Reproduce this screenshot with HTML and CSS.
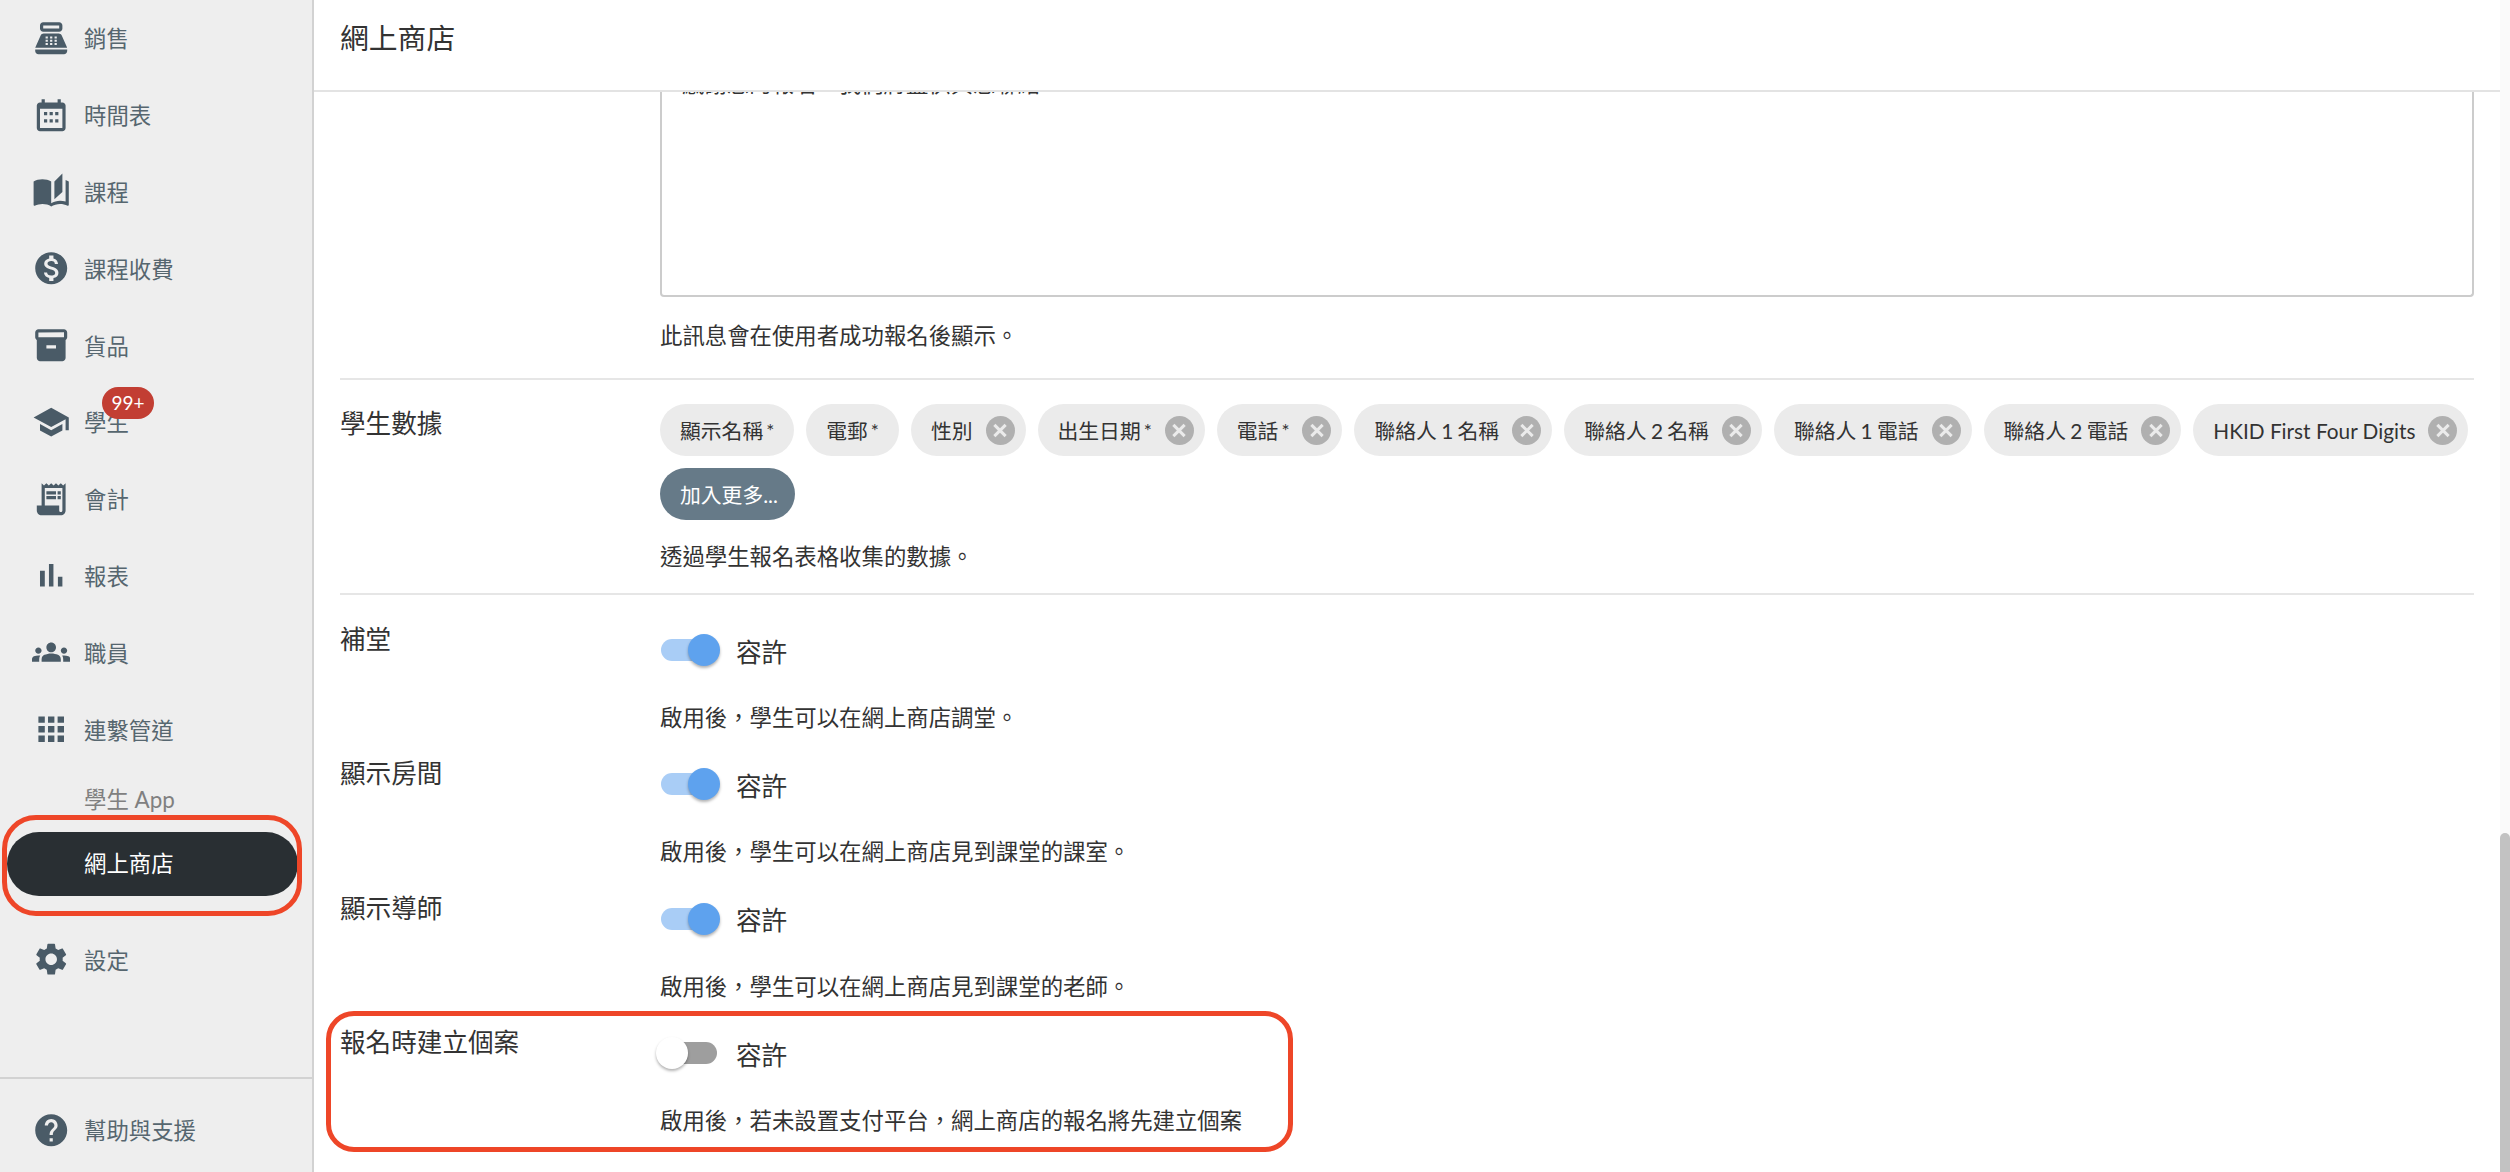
FILE: index.html
```html
<!DOCTYPE html>
<html lang="zh-Hant">
<head>
<meta charset="utf-8">
<title>網上商店</title>
<link rel="stylesheet" href="styles.css">
</head>
<body>
<div class="app">
  <aside class="sidebar">
    <nav class="nav">
      <a class="item"><span class="ico"><svg viewBox="0 0 24 24"><path d="M17 2H7c-1.1 0-2 .9-2 2v2c0 1.1.9 2 2 2h10c1.100 0 2-.9 2-2V4c0-1.100-.9-2-2-2zm0 4H7V4h10v2zm3 16H4c-1.100 0-2-.9-2-2v-1h20v1c0 1.100-.9 2-2 2zm-1.470-11.810C18.210 9.470 17.490 9 16.700 9H7.300c-.79 0-1.510.47-1.830 1.190L2 18h20l-3.470-7.810z"/><path class="cut" d="M8.500 11h1.400v1.200H8.500zM11.300 11h1.400v1.200h-1.400zM14.100 11h1.400v1.200h-1.400zM8.500 13h1.400v1.200H8.500zM11.300 13h1.400v1.200h-1.400zM14.100 13h1.400v1.200h-1.400zM8.500 15h1.400v1.200H8.500zM11.300 15h1.400v1.200h-1.400zM14.100 15h1.400v1.200h-1.400z"/></svg></span><span class="txt">銷售</span></a>
      <a class="item"><span class="ico"><svg viewBox="0 0 24 24"><path d="M19 4h-1V2h-2v2H8V2H6v2H5c-1.100 0-2 .9-2 2v14c0 1.100.9 2 2 2h14c1.100 0 2-.9 2-2V6c0-1.100-.9-2-2-2zm0 16H5V8h14v12z"/><path d="M7.500 10h2v2h-2zM11 10h2v2h-2zM14.500 10h2v2h-2zM7.500 14.500h2v2h-2zM11 14.500h2v2h-2zM14.500 14.500h2v2h-2z"/></svg></span><span class="txt">時間表</span></a>
      <a class="item"><span class="ico"><svg viewBox="0 0 24 24"><path d="M19 1l-5 5v11l5-4.500V1zM1 6v14.650c0 .25.25.5.5.5.1 0 .15-.05.25-.05C3.100 20.450 5.050 20 6.500 20c1.950 0 4.050.4 5.500 1.500V6c-1.450-1.100-3.550-1.500-5.500-1.500S2.450 4.900 1 6zm22 13.500V6c-.6-.45-1.250-.75-2-1v13.500c-1.100-.35-2.300-.5-3.500-.5-1.700 0-4.150.65-5.500 1.500v2c1.350-.85 3.800-1.500 5.500-1.500 1.650 0 3.350.3 4.750 1.050.1.05.15.05.25.05.25 0 .5-.25.5-.5v-1.100z"/></svg></span><span class="txt">課程</span></a>
      <a class="item"><span class="ico"><svg viewBox="0 0 24 24"><path d="M12 2C6.480 2 2 6.480 2 12s4.480 10 10 10 10-4.480 10-10S17.520 2 12 2zm1.410 16.090V20h-2.670v-1.930c-1.710-.36-3.160-1.460-3.270-3.400h1.960c.1 1.050.82 1.870 2.650 1.870 1.960 0 2.400-.98 2.400-1.590 0-.83-.44-1.610-2.670-2.140-2.480-.6-4.180-1.620-4.180-3.670 0-1.720 1.390-2.840 3.110-3.210V4h2.670v1.950c1.860.45 2.790 1.860 2.850 3.390H14.300c-.05-1.110-.64-1.870-2.220-1.870-1.500 0-2.400.68-2.400 1.640 0 .84.65 1.390 2.670 1.910s4.180 1.390 4.180 3.910c-.01 1.830-1.380 2.830-3.120 3.160z"/></svg></span><span class="txt">課程收費</span></a>
      <a class="item"><span class="ico"><svg viewBox="0 0 24 24"><path d="M20 2H4c-1 0-2 .9-2 2v3.010c0 .72.43 1.340 1 1.690V20c0 1.100 1.100 2 2 2h14c.9 0 2-.9 2-2V8.700c.57-.35 1-.97 1-1.690V4c0-1.100-1-2-2-2zm-5 12H9v-2h6v2zm5-7H4V4l16-.02V7z"/></svg></span><span class="txt">貨品</span></a>
      <a class="item"><span class="ico"><svg viewBox="0 0 24 24"><path d="M5 13.180v4L12 21l7-3.820v-4L12 17l-7-3.820zM12 3L1 9l11 6 9-4.910V17h2V9L12 3z"/></svg></span><span class="txt">學生</span><span class="badge">99+</span></a>
      <a class="item"><span class="ico"><svg viewBox="0 0 24 24"><path fill-rule="evenodd" d="M19.500 3.500L18 2l-1.500 1.500L15 2l-1.500 1.500L12 2l-1.500 1.500L9 2 7.500 3.500 6 2v14H3v3c0 1.660 1.340 3 3 3h12c1.660 0 3-1.340 3-3V2l-1.500 1.500zM19 19c0 .55-.45 1-1 1s-1-.45-1-1v-3H8V5h11v14z"/><path d="M9 7h6v2H9zM16 7h2v2h-2zM9 10h6v2H9zM16 10h2v2h-2z"/></svg></span><span class="txt">會計</span></a>
      <a class="item"><span class="ico"><svg viewBox="0 0 24 24"><path d="M5 9.200h3V19H5zM10.600 5h2.800v14h-2.800zM16.200 13H19v6h-2.800z"/></svg></span><span class="txt">報表</span></a>
      <a class="item"><span class="ico"><svg viewBox="0 0 24 24"><path d="M12 12.750c1.630 0 3.070.39 4.240.9 1.080.48 1.760 1.560 1.760 2.730V18H6v-1.610c0-1.180.68-2.260 1.760-2.730 1.170-.52 2.610-.91 4.240-.91zM4 13c1.100 0 2-.9 2-2s-.9-2-2-2-2 .9-2 2 .9 2 2 2zm1.130 1.100c-.37-.06-.74-.1-1.130-.1-.99 0-1.930.21-2.780.58C.48 14.900 0 15.620 0 16.430V18h4.500v-1.610c0-.83.23-1.610.63-2.290zM20 13c1.100 0 2-.9 2-2s-.9-2-2-2-2 .9-2 2 .9 2 2 2zm4 3.430c0-.81-.48-1.530-1.220-1.850-.85-.37-1.790-.58-2.780-.58-.39 0-.76.04-1.130.1.4.68.63 1.460.63 2.290V18H24v-1.570zM12 6c1.660 0 3 1.340 3 3s-1.340 3-3 3-3-1.340-3-3 1.340-3 3-3z"/></svg></span><span class="txt">職員</span></a>
      <a class="item"><span class="ico"><svg viewBox="0 0 24 24"><path d="M4 8h4V4H4v4zm6 12h4v-4h-4v4zm-6 0h4v-4H4v4zm0-6h4v-4H4v4zm6 0h4v-4h-4v4zm6-10v4h4V4h-4zm-6 4h4V4h-4v4zm6 6h4v-4h-4v4zm0 6h4v-4h-4v4z"/></svg></span><span class="txt">連繫管道</span></a>
      <div class="sub">
        <a class="sub-item">學生 App</a>
        <a class="sub-item active">網上商店<span class="mark-side"></span></a>
      </div>
      <a class="item"><span class="ico"><svg viewBox="0 0 24 24"><path d="M19.140 12.940c.04-.3.06-.61.06-.94 0-.32-.02-.64-.07-.94l2.030-1.580c.18-.14.23-.41.12-.61l-1.920-3.320c-.12-.22-.37-.29-.59-.22l-2.390.96c-.5-.38-1.030-.7-1.620-.94l-.36-2.540c-.04-.24-.24-.41-.48-.41h-3.840c-.24 0-.43.17-.47.41l-.36 2.540c-.59.24-1.130.57-1.620.94l-2.390-.96c-.22-.08-.47 0-.59.22L2.740 8.870c-.12.21-.08.47.12.61l2.030 1.580c-.05.3-.09.63-.09.94s.02.64.07.94l-2.030 1.580c-.18.14-.23.41-.12.61l1.920 3.320c.12.22.37.29.59.22l2.390-.96c.5.38 1.030.7 1.620.94l.36 2.540c.05.24.24.41.48.41h3.840c.24 0 .44-.17.47-.41l.36-2.540c.59-.24 1.130-.56 1.620-.94l2.390.96c.22.08.47 0 .59-.22l1.920-3.320c.12-.22.07-.47-.12-.61l-2.010-1.580zM12 15.600c-1.980 0-3.600-1.620-3.600-3.600s1.620-3.600 3.600-3.600 3.600 1.620 3.600 3.600-1.620 3.600-3.600 3.600z"/></svg></span><span class="txt">設定</span></a>
    </nav>
    <div class="side-foot">
      <a class="item"><span class="ico"><svg viewBox="0 0 24 24"><path d="M12 2C6.480 2 2 6.480 2 12s4.480 10 10 10 10-4.480 10-10S17.520 2 12 2zm1 17h-2v-2h2v2zm2.070-7.750l-.9.92C13.450 12.900 13 13.500 13 15h-2v-.5c0-1.100.45-2.100 1.170-2.830l1.240-1.260c.37-.36.59-.86.59-1.410 0-1.100-.9-2-2-2s-2 .9-2 2H8c0-2.210 1.790-4 4-4s4 1.790 4 4c0 .88-.36 1.680-.93 2.250z"/></svg></span><span class="txt">幫助與支援</span></a>
    </div>
  </aside>

  <main class="main">
    <header class="topbar">網上商店</header>
    <div class="pane">
      <div class="content">
        <section class="sec sec-msg">
          <div class="textarea"><div class="textarea-text">感謝您的報名，我們將盡快與您聯絡。</div></div>
          <p class="help help-msg">此訊息會在使用者成功報名後顯示。</p>
        </section>
        <section class="sec sec-data">
          <div class="label">學生數據</div>
          <div>
            <div class="chips">
              <span class="chip">顯示名稱<span class="req">*</span></span>
              <span class="chip">電郵<span class="req">*</span></span>
              <span class="chip">性別<span class="x"></span></span>
              <span class="chip">出生日期<span class="req">*</span><span class="x"></span></span>
              <span class="chip">電話<span class="req">*</span><span class="x"></span></span>
              <span class="chip chip-cjk">聯絡人 1 名稱<span class="x"></span></span>
              <span class="chip chip-cjk">聯絡人 2 名稱<span class="x"></span></span>
              <span class="chip chip-cjk">聯絡人 1 電話<span class="x"></span></span>
              <span class="chip chip-cjk">聯絡人 2 電話<span class="x"></span></span>
              <span class="chip">HKID First Four Digits<span class="x"></span></span>
              <span class="chip chip-add">加入更多...</span>
            </div>
            <p class="help help-data">透過學生報名表格收集的數據。</p>
          </div>
        </section>
        <div class="rows">
          <section class="row">
            <div class="label">補堂</div>
            <div>
              <div class="switch-line"><span class="switch on"></span>容許</div>
              <p class="help">啟用後，學生可以在網上商店調堂。</p>
            </div>
          </section>
          <section class="row">
            <div class="label">顯示房間</div>
            <div>
              <div class="switch-line"><span class="switch on"></span>容許</div>
              <p class="help">啟用後，學生可以在網上商店見到課堂的課室。</p>
            </div>
          </section>
          <section class="row">
            <div class="label">顯示導師</div>
            <div>
              <div class="switch-line"><span class="switch on"></span>容許</div>
              <p class="help">啟用後，學生可以在網上商店見到課堂的老師。</p>
            </div>
          </section>
          <section class="row">
            <div class="label">報名時建立個案</div>
            <div>
              <div class="switch-line"><span class="switch"></span>容許</div>
              <p class="help">啟用後，若未設置支付平台，網上商店的報名將先建立個案</p>
            </div>
            <span class="mark-row"></span>
          </section>
        </div>
      </div>
      <div class="scrollbar"><div class="thumb"></div></div>
    </div>
  </main>
</div>
</body>
</html>
```
FILE: styles.css
```css
* { box-sizing: border-box; }
html, body { margin: 0; height: 100%; overflow: hidden; }
body {
  font-family: Lato, "Noto Sans CJK TC", sans-serif;
  color: #333;
  background: #fff;
}
p { margin: 0; }

.app { display: flex; height: 1172px; }

.sidebar {
  width: 314px;
  flex: none;
  display: flex;
  flex-direction: column;
  justify-content: space-between;
  background: #eee;
  border-right: 2px solid #d2d2d2;
  color: #56666f;
  font-size: 22.4px;
}
.item {
  position: relative;
  display: flex;
  align-items: center;
  height: 76.8px;
  padding-left: 32px;
}
.ico {
  width: 39px;
  height: 39px;
  margin-right: 13px;
  flex: none;
}
.ico svg { display: block; width: 38.4px; height: 38.4px; fill: #4a5b67; }
.ico .cut { fill: #eee; }
.txt { margin-top: -2px; }
.badge {
  position: absolute;
  left: 102px;
  top: 3px;
  width: 52px;
  height: 32px;
  border-radius: 16px;
  background: #c23e33;
  color: #fff;
  font-size: 19px;
  line-height: 32px;
  text-align: center;
}
.sub { margin-bottom: 25.6px; }
.sub-item {
  position: relative;
  display: block;
  height: 64px;
  margin-left: 7px;
  width: 291px;
  padding-left: 77px;
  line-height: 64px;
  color: #808080;
}
.sub-item.active {
  background: #292f33;
  color: #fff;
  border-radius: 32px;
}
.mark-side {
  position: absolute;
  left: -5px;
  top: -17px;
  width: 300px;
  height: 101px;
  border: 5px solid #ee4628;
  border-radius: 34px;
}
.side-foot {
  border-top: 2px solid #d2d2d2;
  height: 95px;
  padding-top: 13px;
}

.main {
  flex: 1;
  min-width: 0;
  display: flex;
  flex-direction: column;
}
.topbar {
  position: relative;
  z-index: 1;
  height: 92px;
  flex: none;
  padding-left: 26px;
  background: #fff;
  border-bottom: 2px solid #e3e3e3;
  font-size: 28.8px;
  line-height: 76px;
  color: #333;
}
.pane { flex: 1; min-height: 0; display: flex; }
.content {
  flex: 1;
  min-width: 0;
  padding: 0 26px;
  overflow: hidden;
}
.scrollbar {
  width: 10px;
  flex: none;
  background: #fafafa;
  margin-top: -92px;
  position: relative;
  z-index: 2;
  display: flex;
  flex-direction: column;
  justify-content: flex-end;
}
.thumb {
  height: 339px;
  background: #c2c2c2;
  border-radius: 5px 5px 0 0;
}

.sec { border-bottom: 2px solid #e6e6e6; }
.sec-msg { padding-left: 320px; padding-bottom: 23px; }
.textarea {
  height: 205px;
  padding: 0 20px;
  border: 2px solid #ccc;
  border-top: 0;
  border-radius: 0 0 4px 4px;
  font-size: 22.4px;
  line-height: 20px;
  overflow: hidden;
}
.textarea-text { margin-top: -18px; }
.help { font-size: 22.4px; line-height: 38px; margin-top: 19px; }
.help-msg { margin-top: 20px; }
.help-data { margin-top: 18px; }

.sec-data,
.row { display: grid; grid-template-columns: 320px 1fr; }
.sec-data { padding-top: 24px; padding-bottom: 17px; }
.label { font-size: 25.6px; line-height: 38px; }

.chips { display: flex; flex-wrap: wrap; gap: 12px; }
.chip {
  display: inline-flex;
  align-items: center;
  height: 52px;
  padding: 0 20px;
  border-radius: 26px;
  background: #ebebeb;
  font-size: 20.8px;
  white-space: pre;
}
.chip:has(.x) { padding-right: 11px; }
.chip-cjk { word-spacing: -1px; }
.chip-add { background: #667a88; color: #fff; padding: 0 17px 0 20px; }
.req { margin-left: 3px; font-size: 19px; }
.x {
  position: relative;
  width: 29px;
  height: 29px;
  margin-left: 13px;
  border-radius: 50%;
  background: #b0b0b0;
}
.x::before,
.x::after {
  content: "";
  position: absolute;
  left: 6.5px;
  top: 13px;
  width: 16px;
  height: 3px;
  background: #ebebeb;
  transform: rotate(45deg);
}
.x::after { transform: rotate(-45deg); }

.rows { padding-top: 25px; }
.row {
  position: relative;
  height: 134.4px;
}
.switch-line {
  display: flex;
  align-items: center;
  height: 60px;
  font-size: 25.6px;
}
.switch {
  position: relative;
  width: 56px;
  height: 22px;
  margin-left: 1px;
  margin-right: 19px;
  border-radius: 11px;
  background: #9e9e9e;
}
.switch::after {
  content: "";
  position: absolute;
  left: -5px;
  top: -5px;
  width: 32px;
  height: 32px;
  border-radius: 50%;
  background: #fff;
  box-shadow: 0 2px 3px rgba(0, 0, 0, .3);
}
.switch.on { background: #a9cdf6; }
.switch.on::after { left: 27px; background: #5ea2ee; }

.mark-row {
  position: absolute;
  left: -14px;
  top: -12px;
  width: 967px;
  height: 141px;
  border: 5px solid #ee4628;
  border-radius: 28px;
  pointer-events: none;
}
```
